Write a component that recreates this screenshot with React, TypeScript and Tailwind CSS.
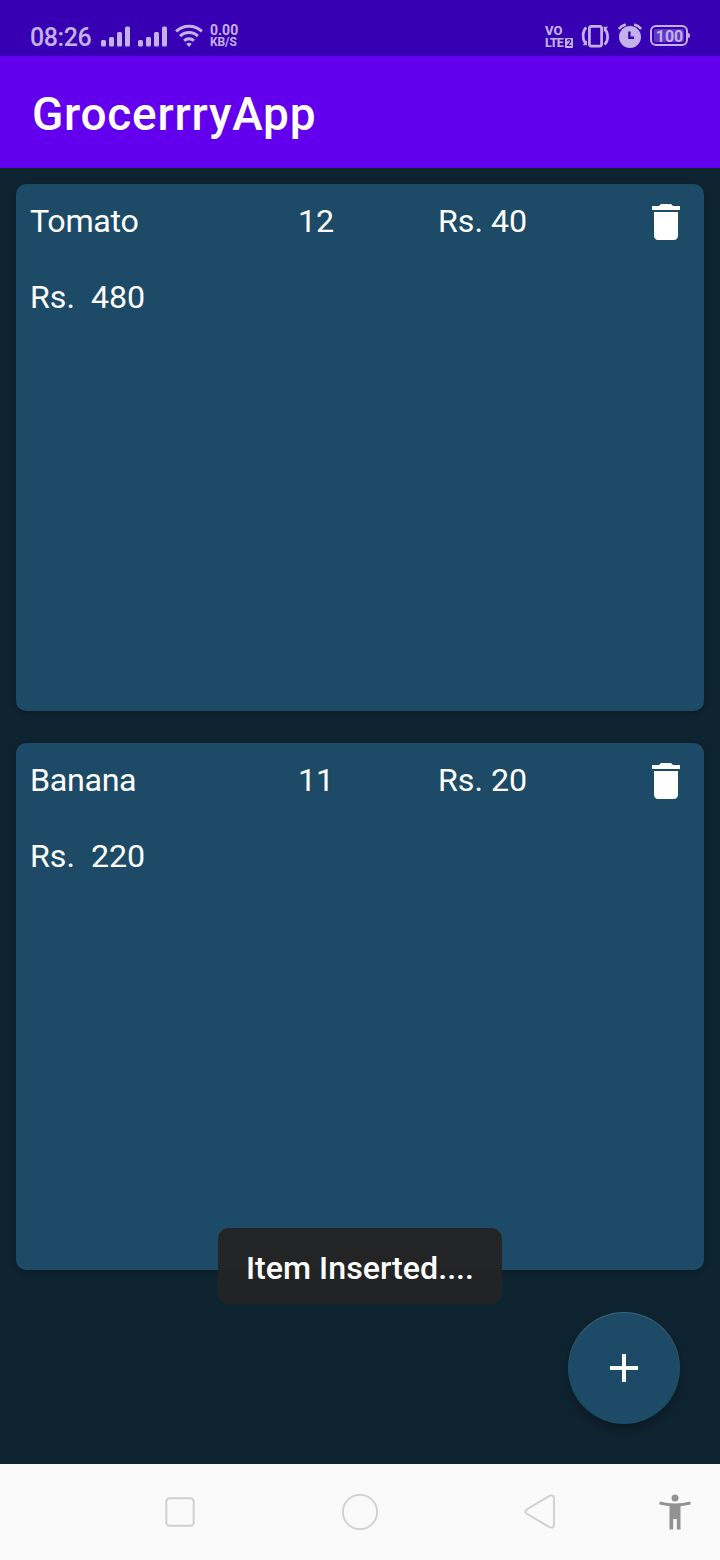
interface GroceryItem {
  name: string;
  quantity: number;
  price: number;
}

const items: GroceryItem[] = [
  { name: "Tomato", quantity: 12, price: 40 },
  { name: "Banana", quantity: 11, price: 20 },
];

function Signal() {
  return (
    <svg width="30" height="22" viewBox="0 0 30 22" fill="currentColor">
      <rect x="0" y="14" width="5" height="6.5" rx="1.5" />
      <rect x="8" y="11" width="5" height="9.5" rx="1.5" />
      <rect x="16" y="6" width="5" height="14.5" rx="1.5" />
      <rect x="24" y="0.5" width="5" height="20" rx="1.5" />
    </svg>
  );
}

function Wifi() {
  return (
    <svg width="28" height="23" viewBox="0 0 28 23" fill="none" stroke="currentColor" strokeWidth="3">
      <path d="M1.1 7.4a18.500 18.500 0 0 1 25.800 0" />
      <path d="M5.100 12.100a12.800 12.800 0 0 1 17.800 0" />
      <path d="M9.100 16.700a7 7 0 0 1 9.800 0" />
      <path d="M11.300 20q2.700-2.300 5.400 0L14 22.900z" fill="currentColor" stroke="none" />
    </svg>
  );
}

function Vibrate() {
  return (
    <svg width="30" height="24" viewBox="0 0 30 24" fill="none" stroke="currentColor" strokeWidth="2.7">
      <rect x="8.400" y="2.300" width="12.200" height="19.800" rx="2" />
      <path d="M5.200 3.400C1.200 7.500 1.200 14.500 4.200 18.900" />
      <path d="M24 5.200C27.600 9.500 27.600 16.500 23.600 20.600" />
      <path d="M6 16.400v4.900H1.500z M22.700 2.800v4.900l4.500-4.900z" fill="currentColor" stroke="none" />
    </svg>
  );
}

function Alarm() {
  return (
    <svg width="24" height="25" viewBox="0 0 24 25" fill="none" stroke="currentColor" strokeWidth="2.4">
      <circle cx="12" cy="14" r="11" fill="currentColor" stroke="none" />
      <path d="M.9 5.900Q3.400 2.700 7.800 1.500M23.100 5.900Q20.600 2.700 16.200 1.500" />
      <path d="M11.400 8.500v6.200h4.600" className="stroke-[#3700b3]" />
    </svg>
  );
}

function StatusBar() {
  return (
    <header className="flex h-14 shrink-0 items-start bg-[#3700b3] text-[#c3b2e9]">
      <span className="mt-6 ml-[30px] w-[71px] text-[25px] leading-7 font-medium tracking-[-0.4px]">08:26</span>
      <div className="mt-[25.5px] flex gap-[7px]">
        <Signal />
        <Signal />
      </div>
      <div className="mt-6 ml-[7px]">
        <Wifi />
      </div>
      <div className="mt-6 ml-[7px] text-[14px] leading-3 font-bold">
        <div>0.00</div>
        <div className="text-[12px] tracking-[-0.1px]">KB/S</div>
      </div>
      <div className="mt-[25px] mr-[30px] ml-auto flex items-start">
        <div className="w-[36px] text-[13px] leading-3 font-extrabold">
          <div>VO</div>
          <div className="flex items-center">
            <span className="w-[20px] text-[12.500px] tracking-[-0.7px]">LTE</span>
            <span className="flex h-[10px] w-[8px] items-center justify-center rounded-[1px] bg-[#c3b2e9] text-[9px] text-[#3700b3]">2</span>
          </div>
        </div>
        <div className="-mt-px">
          <Vibrate />
        </div>
        <div className="-mt-[2.5px] ml-[7px]">
          <Alarm />
        </div>
        <div className="ml-2 flex items-center">
          <div className="flex h-[21px] w-[38px] items-center justify-center rounded-[6px] border-2 border-[#c3b2e9]">
            <span className="flex h-[13px] w-[30px] items-center justify-center rounded-[2px] bg-[#6137c5] pt-[2px] pl-px text-[16px] font-bold">100</span>
          </div>
          <div className="h-[5px] w-[2px] rounded-r bg-[#c3b2e9]" />
        </div>
      </div>
    </header>
  );
}

function GroceryCard({ item }: { item: GroceryItem }) {
  return (
    <article className="h-[527px] shrink-0 rounded-[10px] bg-[#1d4a66] pt-[18px] pl-[14px] text-[32.2px] leading-[38px] text-white shadow-[0_2px_7px_rgba(0,0,0,0.3)]">
      <div className="flex h-[38px]">
        <span className="w-[268px] tracking-[-0.3px]">{item.name}</span>
        <span className="w-[140px]">{item.quantity}</span>
        <span className="w-[204px]">Rs. {item.price}</span>
        <button aria-label={`Delete ${item.name}`} className="-mt-1 h-12 w-12">
          <svg width="48" height="48" viewBox="0 0 24 24" fill="currentColor">
            <path d="M6 19c0 1.1.9 2 2 2h8c1.1 0 2-.9 2-2V7H6v12zM19 4h-3.500l-1-1h-5l-1 1H5v2h14V4z" />
          </svg>
        </button>
      </div>
      <div className="mt-[38px] whitespace-pre">{`Rs.  ${item.quantity * item.price}`}</div>
    </article>
  );
}

function NavigationBar() {
  return (
    <nav className="flex h-24 shrink-0 items-center bg-[#fafafa] pl-[162px] text-[#cfcfcf]">
      <svg width="36" height="38" viewBox="0 0 36 38" fill="none" stroke="currentColor" strokeWidth="2">
        <rect x="4.300" y="5.300" width="27.400" height="27.400" rx="3.500" />
      </svg>
      <svg className="ml-[144px]" width="36" height="38" viewBox="0 0 36 38" fill="none" stroke="currentColor" strokeWidth="1.8">
        <circle cx="18" cy="19" r="17.1" />
      </svg>
      <svg className="ml-[144px]" width="36" height="38" viewBox="0 0 36 38" fill="none" stroke="currentColor" strokeWidth="1.9">
        <path d="M4.700 16.500 27 3.100Q32 .8 32 6V31Q32 36.200 27 33.900L4.700 20.700Q2 18.600 4.700 16.500Z" />
      </svg>
      <svg className="ml-[101px] text-[#929292]" width="32" height="38" viewBox="0 0 32 38" fill="currentColor">
        <circle cx="16" cy="5" r="3.500" />
        <path d="M.8 8.500Q16 12.400 31.200 8.500L31.800 11.500 21.500 13.300V36.500H17.800V26H14.200V36.500H10.500V13.300L.2 11.500Z" />
      </svg>
    </nav>
  );
}

export default function App() {
  return (
    <div className="relative flex h-[1560px] w-[720px] flex-col overflow-hidden bg-[#0f2431] font-[Roboto,sans-serif]">
      <StatusBar />
      <div className="flex h-28 shrink-0 items-center bg-[#6200ee] pt-1 pl-8">
        <h1 className="text-[46px] leading-[54px] font-medium tracking-[0.75px] text-white">GrocerrryApp</h1>
      </div>
      <main className="flex h-[1296px] shrink-0 flex-col gap-8 p-4">
        {items.map((item) => (
          <GroceryCard key={item.name} item={item} />
        ))}
      </main>
      <NavigationBar />
      <button
        aria-label="Add item"
        className="absolute top-[1312px] left-[568px] flex h-28 w-28 items-center justify-center rounded-full bg-[#1d4a66] text-white shadow-[0_6px_12px_rgba(0,0,0,0.3),inset_0_1px_1px_rgba(255,255,255,0.15)]"
      >
        <svg width="48" height="48" viewBox="0 0 24 24" fill="currentColor">
          <path d="M19 13h-6v6h-2v-6H5v-2h6V5h2v6h6v2z" />
        </svg>
      </button>
      <div
        role="status"
        className="absolute top-[1228px] left-[218px] flex h-[76px] w-[284px] items-center justify-center rounded-[11px] bg-[#222324]/97 pt-1 text-[32.2px] font-medium text-white"
      >
        Item Inserted....
      </div>
    </div>
  );
}
